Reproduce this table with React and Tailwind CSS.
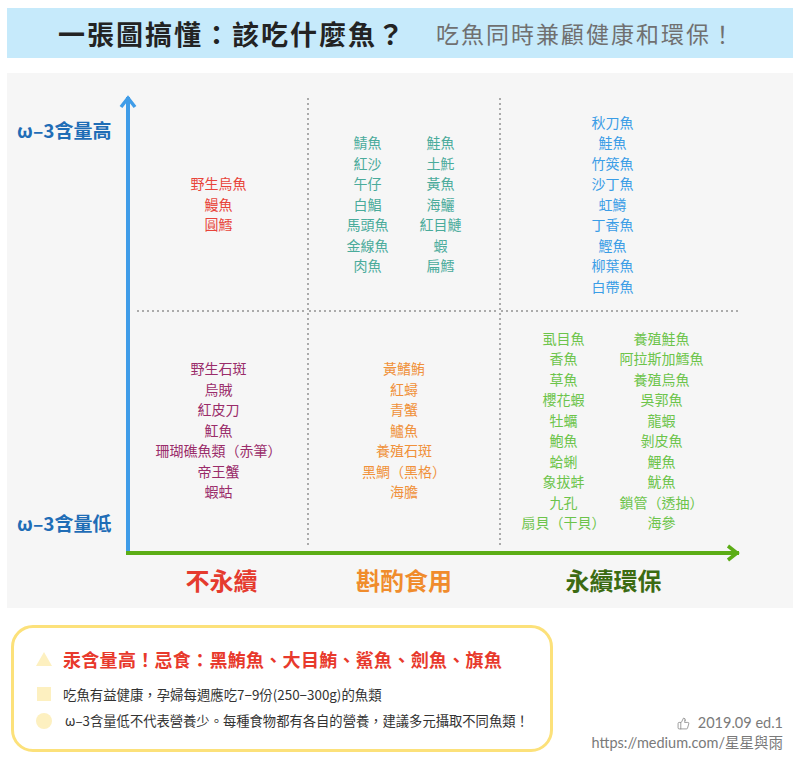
import React from "react";
import { ThumbsUp } from "lucide-react";

const topLeft = ["野生烏魚", "鰻魚", "圓鱈"];
const topMidA = ["鯖魚", "紅沙", "午仔", "白鯧", "馬頭魚", "金線魚", "肉魚"];
const topMidB = ["鮭魚", "土魠", "黃魚", "海鱺", "紅目鰱", "蝦", "扁鱈"];
const topRight = ["秋刀魚", "鮭魚", "竹筴魚", "沙丁魚", "虹鱒", "丁香魚", "鰹魚", "柳葉魚", "白帶魚"];
const botLeft = ["野生石斑", "烏賊", "紅皮刀", "魟魚", "珊瑚礁魚類（赤筆）", "帝王蟹", "蝦蛄"];
const botMid = ["黃鰭鮪", "紅蟳", "青蟹", "鱸魚", "養殖石斑", "黑鯛（黑格）", "海膽"];
const botRightA = ["虱目魚", "香魚", "草魚", "櫻花蝦", "牡蠣", "鮑魚", "蛤蜊", "象拔蚌", "九孔", "扇貝（干貝）"];
const botRightB = ["養殖鮭魚", "阿拉斯加鱈魚", "養殖烏魚", "吳郭魚", "龍蝦", "剝皮魚", "鯉魚", "魷魚", "鎖管（透抽）", "海參"];

function List({ items, color, width }) {
  return (
    <ul className={`flex flex-col items-center text-[14px] leading-[20.5px] whitespace-nowrap ${color} ${width || ""}`}>
      {items.map((t, i) => (
        <li key={i}>{t}</li>
      ))}
    </ul>
  );
}

function VDots() {
  return <div className="w-[2px] self-stretch bg-[linear-gradient(to_bottom,#ababab_40%,transparent_40%)] bg-size-[2px_5px]" />;
}

function HDots({ className = "" }) {
  return <div className={`h-[2px] bg-[linear-gradient(to_right,#ababab_40%,transparent_40%)] bg-size-[5px_2px] ${className}`} />;
}

function App() {
  return (
    <div className="w-[800px] h-[763px] bg-white pt-2 font-['Noto_Sans_CJK_TC',sans-serif]">
      {/* title banner */}
      <header className="mx-[7px] h-[50px] bg-[#c6eafb] flex items-center justify-center gap-[30px] pr-[6px]">
        <h1 className="text-[27px] font-bold tracking-[2px] leading-none text-[#232323]">一張圖搞懂：該吃什麼魚？</h1>
        <p className="text-[23px] tracking-[2px] leading-none text-[#707070]">吃魚同時兼顧健康和環保！</p>
      </header>

      {/* chart panel */}
      <section className="mx-[7px] mt-[15px] h-[535px] bg-[#f6f6f6] flex flex-col pt-[22px]">
        <div className="flex h-[456px]">
          <div className="w-[119px] flex flex-col justify-between pt-[23px] pb-[16px] pl-[10px] text-[19px] font-bold leading-[24px] text-[#1f6db6]">
            <span>ω–3含量高</span>
            <span>ω–3含量低</span>
          </div>

          <div className="relative w-[4px] mt-[2px] bg-[#3f9ce8]">
            <svg className="absolute left-1/2 -translate-x-1/2 -top-[2px]" width="20" height="14" viewBox="0 0 20 14">
              <polyline points="3,12 10,3 17,12" fill="none" stroke="#3f9ce8" strokeWidth="3.5" strokeLinejoin="miter" />
            </svg>
          </div>

          <div className="flex pt-[3px] pb-[3px]">
            <div className="w-[177px] flex flex-col">
              <div className="h-[212px] flex items-center justify-center">
                <List items={topLeft} color="text-[#e8443a]" />
              </div>
              <HDots className="ml-[7px]" />
              <div className="flex-1 flex items-center justify-center">
                <List items={botLeft} color="text-[#9a2c6a]" />
              </div>
            </div>
            <VDots />
            <div className="w-[190px] flex flex-col">
              <div className="h-[212px] flex items-center justify-center">
                <List items={topMidA} color="text-[#4aab9b]" width="w-[73px]" />
                <List items={topMidB} color="text-[#4aab9b]" width="w-[73px]" />
              </div>
              <HDots />
              <div className="flex-1 flex items-center justify-center">
                <List items={botMid} color="text-[#f0913a]" />
              </div>
            </div>
            <VDots />
            <div className="w-[239px] flex flex-col">
              <div className="h-[212px] flex items-center justify-center pr-[16px]">
                <List items={topRight} color="text-[#3a9de6]" />
              </div>
              <HDots />
              <div className="flex-1 flex items-center justify-center pr-[16px]">
                <List items={botRightA} color="text-[#6cc44a]" width="w-[98px]" />
                <List items={botRightB} color="text-[#6cc44a]" width="w-[98px]" />
              </div>
            </div>
          </div>
        </div>

        {/* x axis */}
        <div className="pl-[119px]">
          <div className="relative w-[613px] h-[4px] bg-[#5cad16]">
            <svg className="absolute -right-[1px] -top-[8px]" width="14" height="20" viewBox="0 0 14 20">
              <polyline points="2,3 11,10 2,17" fill="none" stroke="#5cad16" strokeWidth="3.5" strokeLinejoin="miter" />
            </svg>
          </div>
        </div>

        <div className="flex-1 flex items-center pl-[123px] pb-[3px] text-[24px] font-bold leading-none">
          <div className="w-[177px] text-center pl-[6px] text-[#e53b2e]">不永續</div>
          <div className="w-[194px] text-center text-[#f08c2c]">斟酌食用</div>
          <div className="w-[225px] text-center text-[#3c6b12]">永續環保</div>
        </div>
      </section>

      {/* notes + credit */}
      <div className="flex justify-between items-end mt-[17px]">
        <div className="ml-[11px] w-[542px] h-[127px] border-[3px] border-[#fce17a] rounded-[22px] bg-white pl-[22px] pt-[18px] flex flex-col">
          <div className="flex items-center gap-[11px] h-[26px]">
            <svg width="16" height="14" viewBox="0 0 16 14">
              <polygon points="8,0 16,14 0,14" fill="#fdf0c0" />
            </svg>
            <span className="text-[18px] font-bold tracking-[0.3px] text-[#e8392c]">汞含量高！忌食：黑鮪魚、大目鮪、鯊魚、劍魚、旗魚</span>
          </div>
          <div className="flex items-center gap-[11px] h-[20px] mt-[12px]">
            <span className="w-[14px] h-[14px] ml-[1px] mr-[1px] bg-[#fdf0c0]" />
            <span className="text-[13.4px] text-[#333]">吃魚有益健康，孕婦每週應吃7−9份(250−300g)的魚類</span>
          </div>
          <div className="flex items-center gap-[13px] h-[20px] mt-[7px]">
            <span className="w-[16px] h-[16px] rounded-full bg-[#fdf0c0]" />
            <span className="text-[13.3px] text-[#333]">ω–3含量低不代表營養少。每種食物都有各自的營養，建議多元攝取不同魚類！</span>
          </div>
        </div>

        <div className="pr-[17px] flex flex-col items-end text-[14.5px] leading-[20px] text-[#7a7a7a] font-['Lato','Noto_Sans_CJK_TC',sans-serif] mb-[-1px]">
          <div className="flex items-center gap-[8px]">
            <ThumbsUp size={13} strokeWidth={1.5} color="#888" />
            <span>2019.09 ed.1</span>
          </div>
          <span>https://medium.com/星星與雨</span>
        </div>
      </div>
    </div>
  );
}

export default App;
